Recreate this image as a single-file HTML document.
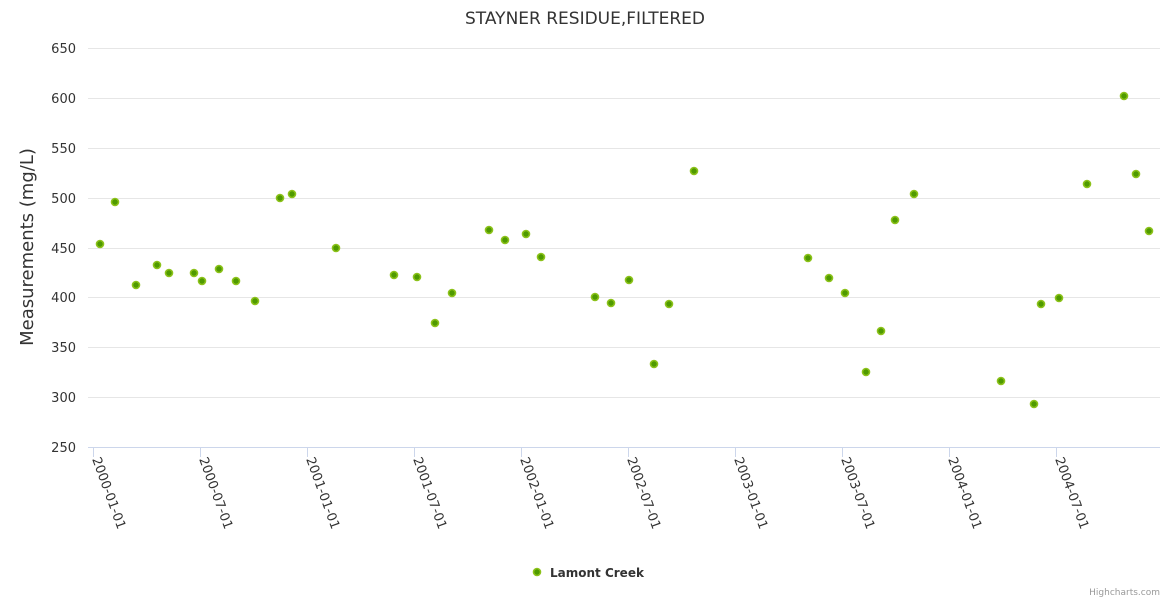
<!DOCTYPE html>
<html><head><meta charset="utf-8"><style>
html,body{margin:0;padding:0;background:#fff;}
svg{display:block;font-family:"DejaVu Sans","Liberation Sans",sans-serif;}
</style></head><body>
<svg width="1170" height="600" viewBox="0 0 1170 600">
<text x="585" y="24" text-anchor="middle" font-size="17" fill="#333">STAYNER RESIDUE,FILTERED</text>
<g stroke="#e6e6e6" stroke-width="1">
<line x1="88" x2="1160" y1="48.5" y2="48.5"/><line x1="88" x2="1160" y1="98.5" y2="98.5"/>
<line x1="88" x2="1160" y1="148.5" y2="148.5"/><line x1="88" x2="1160" y1="198.5" y2="198.5"/>
<line x1="88" x2="1160" y1="248.5" y2="248.5"/><line x1="88" x2="1160" y1="297.5" y2="297.5"/>
<line x1="88" x2="1160" y1="347.5" y2="347.5"/><line x1="88" x2="1160" y1="397.5" y2="397.5"/>
</g>
<line x1="88" x2="1160" y1="447.5" y2="447.5" stroke="#ccd6eb"/>
<g fill="#333" font-size="13" text-anchor="end">
<text x="76" y="53">650</text><text x="76" y="103">600</text><text x="76" y="153">550</text>
<text x="76" y="203">500</text><text x="76" y="253">450</text><text x="76" y="302">400</text>
<text x="76" y="352">350</text><text x="76" y="402">300</text><text x="76" y="452">250</text>
</g>
<text transform="translate(33,247) rotate(-90)" text-anchor="middle" font-size="18" fill="#333">Measurements (mg/L)</text>
<g stroke="#ccd6eb">
<line x1="93.5" x2="93.5" y1="447" y2="457"/><line x1="200.5" x2="200.5" y1="447" y2="457"/>
<line x1="307.5" x2="307.5" y1="447" y2="457"/><line x1="414.5" x2="414.5" y1="447" y2="457"/>
<line x1="521.5" x2="521.5" y1="447" y2="457"/><line x1="628.5" x2="628.5" y1="447" y2="457"/>
<line x1="735.5" x2="735.5" y1="447" y2="457"/><line x1="842.5" x2="842.5" y1="447" y2="457"/>
<line x1="949.5" x2="949.5" y1="447" y2="457"/><line x1="1056.5" x2="1056.5" y1="447" y2="457"/>
</g>
<g fill="#333" font-size="13">
<text transform="translate(92,459) rotate(70)">2000-01-01</text>
<text transform="translate(199,459) rotate(70)">2000-07-01</text>
<text transform="translate(306,459) rotate(70)">2001-01-01</text>
<text transform="translate(413,459) rotate(70)">2001-07-01</text>
<text transform="translate(520,459) rotate(70)">2002-01-01</text>
<text transform="translate(627,459) rotate(70)">2002-07-01</text>
<text transform="translate(734,459) rotate(70)">2003-01-01</text>
<text transform="translate(841,459) rotate(70)">2003-07-01</text>
<text transform="translate(948,459) rotate(70)">2004-01-01</text>
<text transform="translate(1055,459) rotate(70)">2004-07-01</text>
</g>
<g fill="#4f9a00" stroke="#8cc21a" stroke-width="1.6">
<circle cx="100" cy="244" r="3.5"/><circle cx="115" cy="202" r="3.5"/><circle cx="136" cy="285" r="3.5"/>
<circle cx="157" cy="265" r="3.5"/><circle cx="169" cy="273" r="3.5"/><circle cx="194" cy="273" r="3.5"/>
<circle cx="202" cy="281" r="3.5"/><circle cx="219" cy="269" r="3.5"/><circle cx="236" cy="281" r="3.5"/>
<circle cx="255" cy="301" r="3.5"/><circle cx="280" cy="198" r="3.5"/><circle cx="292" cy="194" r="3.5"/>
<circle cx="336" cy="248" r="3.5"/><circle cx="394" cy="275" r="3.5"/><circle cx="417" cy="277" r="3.5"/>
<circle cx="435" cy="323" r="3.5"/><circle cx="452" cy="293" r="3.5"/><circle cx="489" cy="230" r="3.5"/>
<circle cx="505" cy="240" r="3.5"/><circle cx="526" cy="234" r="3.5"/><circle cx="541" cy="257" r="3.5"/>
<circle cx="595" cy="297" r="3.5"/><circle cx="611" cy="303" r="3.5"/><circle cx="629" cy="280" r="3.5"/>
<circle cx="654" cy="364" r="3.5"/><circle cx="669" cy="304" r="3.5"/><circle cx="694" cy="171" r="3.5"/>
<circle cx="808" cy="258" r="3.5"/><circle cx="829" cy="278" r="3.5"/><circle cx="845" cy="293" r="3.5"/>
<circle cx="866" cy="372" r="3.5"/><circle cx="881" cy="331" r="3.5"/><circle cx="895" cy="220" r="3.5"/>
<circle cx="914" cy="194" r="3.5"/><circle cx="1001" cy="381" r="3.5"/><circle cx="1034" cy="404" r="3.5"/>
<circle cx="1041" cy="304" r="3.5"/><circle cx="1059" cy="298" r="3.5"/><circle cx="1087" cy="184" r="3.5"/>
<circle cx="1124" cy="96" r="3.5"/><circle cx="1136" cy="174" r="3.5"/><circle cx="1149" cy="231" r="3.5"/>
<circle cx="537" cy="572" r="3.5"/>
</g>
<text x="550" y="577" font-size="12" font-weight="bold" fill="#333">Lamont Creek</text>
<text x="1160" y="595" text-anchor="end" font-size="9" fill="#999">Highcharts.com</text>
</svg>
</body></html>
